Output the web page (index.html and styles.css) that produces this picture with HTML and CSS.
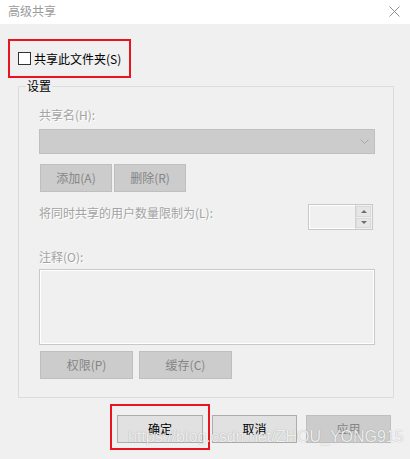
FILE: index.html
```html
<!DOCTYPE html>
<html lang="zh-CN">
<head>
    <meta charset="UTF-8">
    <meta name="viewport" content="width=device-width, initial-scale=1.0">
    <title>高级共享</title>
    <link rel="stylesheet" href="styles.css">
</head>
<body>

    <div class="window">
        <div class="titlebar">
            <span class="title">高级共享</span>
            <svg class="close" width="11" height="11" viewBox="0 0 11 11">
                <path d="M0.5 0.5 L10.5 10.5 M10.5 0.5 L0.5 10.5" stroke="#8f8f8f" stroke-width="1" fill="none"/>
            </svg>
        </div>

        <div class="dialog">
            <!-- Share toggle (annotated with red frame) -->
            <div class="mark share-toggle">
                <span class="checkbox"></span>
                <span>共享此文件夹(S)</span>
            </div>

            <fieldset class="group">
                <legend>设置</legend>

                <div class="label">共享名(H):</div>
                <div class="combo">
                    <svg class="chevron" width="9" height="5" viewBox="0 0 9 5">
                        <path d="M0.5 0.5 L4.5 4.5 L8.5 0.5" stroke="#a6a6a6" stroke-width="1" fill="none"/>
                    </svg>
                </div>

                <div class="btn-row">
                    <button class="btn disabled small">添加(A)</button>
                    <button class="btn disabled small">删除(R)</button>
                </div>

                <div class="limit-row">
                    <span class="label">将同时共享的用户数量限制为(L):</span>
                    <div class="spinner">
                        <div class="spin-field"></div>
                        <div class="spin-btns">
                            <span class="spin"><span class="arrow up"></span></span>
                            <span class="spin"><span class="arrow down"></span></span>
                        </div>
                    </div>
                </div>

                <div class="label comment-label">注释(O):</div>
                <div class="textarea"></div>

                <div class="btn-row wide">
                    <button class="btn disabled medium">权限(P)</button>
                    <button class="btn disabled medium">缓存(C)</button>
                </div>
            </fieldset>

            <div class="actions">
                <div class="mark ok-mark">
                    <button class="btn action">确定</button>
                </div>
                <button class="btn action cancel">取消</button>
                <button class="btn action disabled apply">应用</button>
            </div>
        </div>

        <div class="watermark">https://blog.csdn.net/ZHOU_YONG915</div>
    </div>

</body>
</html>
```

FILE: styles.css
```css
body {
    margin: 0;
    background-color: #f0f0f0;
    font-family: "Noto Sans CJK SC", "Noto Sans", sans-serif;
    font-size: 12px;
    line-height: 16px;
    color: #000;
}

.window {
    position: relative;
    width: 410px;
    height: 459px;
    overflow: hidden;
    background: #f0f0f0;
}

.titlebar {
    height: 24px;
    background: #ffffff;
    display: flex;
    align-items: center;
    justify-content: space-between;
    padding: 0 10px 2px 8px;
    box-sizing: border-box;
}

.title {
    color: #9a9a9a;
}

.close {
    display: block;
}

/* red annotation frames */
.mark {
    border: 2px solid #e8141e;
    box-sizing: border-box;
}

.share-toggle {
    margin: 15px 0 0 8px;
    width: 123px;
    height: 39px;
    display: flex;
    align-items: center;
    padding-left: 8px;
}

.checkbox {
    width: 13px;
    height: 13px;
    box-sizing: border-box;
    border: 1px solid #333;
    background: #fff;
    margin-right: 3px;
}

.group {
    margin: 0 16px 0 18px;
    padding: 13px 18px 18px 20px;
    border: 1px solid #dcdcdc;
    min-width: 0;
}

.group legend {
    padding: 0 1px;
    margin-left: -13px;
    line-height: 16px;
}

.label {
    color: #a3a3a3;
    text-shadow: 1px 1px 0 #ffffff;
}

.combo {
    margin-top: 6px;
    height: 25px;
    box-sizing: border-box;
    background: #cccccc;
    border: 1px solid #bfbfbf;
    display: flex;
    align-items: center;
    justify-content: flex-end;
    padding-right: 5px;
}

.btn {
    font-family: inherit;
    font-size: 12px;
    line-height: 16px;
    height: 28px;
    padding: 0;
    box-sizing: border-box;
    background: #e1e1e1;
    border: 1px solid #adadad;
    color: #000;
}

.btn.disabled {
    background: #cccccc;
    border-color: #bfbfbf;
    color: #858585;
}

.btn-row {
    display: flex;
    gap: 2px;
    margin: 10px 0 0 1px;
}

.small {
    width: 72px;
}

.btn-row.wide {
    gap: 6px;
    margin-top: 6px;
}

.medium {
    width: 93px;
}

.limit-row {
    display: flex;
    justify-content: space-between;
    align-items: flex-start;
    margin-top: 12px;
}

.limit-row .label {
    margin-top: 1px;
}

.spinner {
    width: 65px;
    height: 26px;
    margin-right: 2px;
    box-sizing: border-box;
    border: 1px solid #c8c8c8;
    display: flex;
}

.spin-field {
    flex: 1;
    border: 1px solid #ffffff;
    border-right: none;
}

.spin-btns {
    width: 17px;
    display: flex;
    flex-direction: column;
    justify-content: center;
    gap: 1px;
    padding: 1px 1px 1px 0;
    box-sizing: border-box;
    background: #f0f0f0;
    border-left: 1px solid #d4d4d4;
}

.spin {
    flex: 1;
    background: #e6e6e6;
    border: 1px solid #d9d9d9;
    display: flex;
    align-items: center;
    justify-content: center;
}

.arrow {
    width: 0;
    height: 0;
    border-left: 3px solid transparent;
    border-right: 3px solid transparent;
}

.arrow.up {
    border-bottom: 3px solid #6d6d6d;
}

.arrow.down {
    border-top: 3px solid #6d6d6d;
}

.comment-label {
    margin-top: 19px;
}

.textarea {
    margin-top: 4px;
    height: 76px;
    box-sizing: border-box;
    border: 1px solid #c8c8c8;
    box-shadow: inset 0 0 0 1px #ffffff;
}

.actions {
    display: flex;
    align-items: flex-start;
    margin: 6px 0 0 110px;
}

.ok-mark {
    width: 100px;
    height: 46px;
    padding: 9px 5px 0 5px;
}

.action {
    width: 86px;
}

.cancel {
    width: 85px;
    margin: 11px 0 0 2px;
}

.apply {
    width: 85px;
    margin: 11px 0 0 9px;
}

.watermark {
    position: absolute;
    left: 128px;
    top: 426px;
    font-family: "Liberation Sans", Arial, sans-serif;
    font-size: 16px;
    line-height: 22px;
    color: rgba(255, 255, 255, 0.85);
    text-shadow: 0 0 1px rgba(0, 0, 0, 0.35);
    white-space: nowrap;
}
```
